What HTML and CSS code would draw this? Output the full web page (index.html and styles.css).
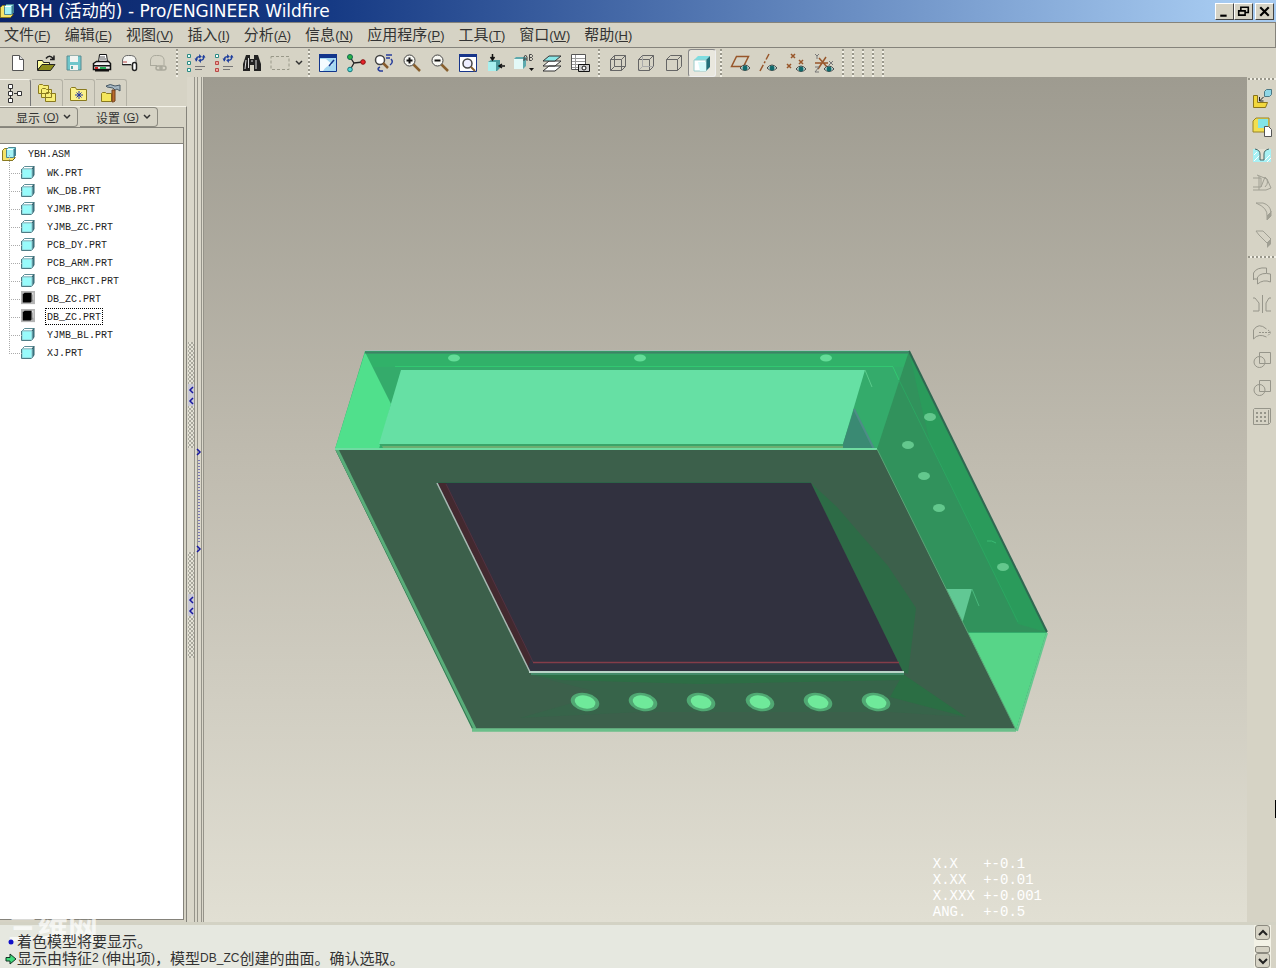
FILE: index.html
```html
<!DOCTYPE html>
<html lang="zh-CN">
<head>
<meta charset="utf-8">
<title>YBH (活动的) - Pro/ENGINEER Wildfire</title>
<link rel="stylesheet" href="styles.css">
</head>
<body>
<svg class="defs" aria-hidden="true">
  <symbol id="asm" viewBox="0 0 14 14"><path d="M.5 3.500l2-2h3v7h7v3l-2 2H.5z" fill="#f5e36a" stroke="#8a7a20"/><path d="M10.500 13.500l3-3" stroke="#6b5d18"/><path d="M4.500 2.500l2-2h7v8l-2 2H4.500z" fill="#a4f2f4" stroke="#4d8793"/><path d="M11.500 2.500l2-2v8l-2 2z" fill="#3c7f93"/><path d="M5 2.500h6" stroke="#fff"/></symbol>
  <symbol id="part" viewBox="0 0 14 14"><path d="M1 4l2.500-2.500h9.500L11 4z" fill="#fff" stroke="#5d8c96"/><path d="M11 4l2-2.500v8.500L11 13z" fill="#3e8693" stroke="#35606a"/><path d="M1 4H11v9H1z" fill="#98fbfb" stroke="#8fc4cb"/><path d="M.5 4v9.500h10" fill="none" stroke="#4f7c85"/></symbol>
  <symbol id="partsel" viewBox="0 0 16 16"><path d="M0 0h16v15H0z" fill="#b4b4b4"/><path d="M3 3l1-1h8v10l-1 1H2V3z" fill="#000"/><path d="M13.500 2v8" stroke="#fff"/><path d="M12.500 4v8" stroke="#555"/></symbol>
  <symbol id="new" viewBox="0 0 20 20"><path d="M4.500 2.500h7l4 4v11h-11z" fill="#fff" stroke="#555"/><path d="M11.500 2.500v4h4" fill="#ddd" stroke="#555"/></symbol>
  <symbol id="open" viewBox="0 0 20 20"><path d="M1.500 17V7.500h5l1 2h6V12H6z" fill="#ffffa0" stroke="#222"/><path d="M1.500 17.500L6 11.500h13l-4.500 6z" fill="#8c8c1c" stroke="#222"/><path d="M10 5.500c2-3 5-3 7 0M18 2.500v4h-4" fill="none" stroke="#222" stroke-width="1.500"/></symbol>
  <symbol id="save" viewBox="0 0 20 20"><path d="M3 3h14v14H3z" fill="#6fc6cb" stroke="#5b8c92"/><path d="M6 3h8v6H6zM6 12h8v5H6z" fill="#f1f4f1"/><path d="M7 13h2v3H7z" fill="#5aa"/></symbol>
  <symbol id="print" viewBox="0 0 20 20"><path d="M6.500 9l1-7.500h7L15.500 9z" fill="#fff" stroke="#111"/><path d="M8 4h5M8 6h6" stroke="#555"/><path d="M1.500 10.500l3-2h12l2 2v6h-17z" fill="#eee" stroke="#111" stroke-width="1.500"/><path d="M2 12h16v1.500H2zM3 17h14v1.500H3z" fill="#111"/><path d="M3 14h3v2H3z" fill="#c22"/><path d="M8 14h6v2H8z" fill="#2a5"/></symbol>
  <symbol id="mail" viewBox="0 0 20 20"><path d="M2.500 12V7q1-5 6-4.500 7-.5 7.500 4v5.500z" fill="#f5f5f2" stroke="#666"/><path d="M2 11.500h9" stroke="#222"/><path d="M3 9h4" stroke="#b44"/><rect x="12.500" y="9.500" width="4" height="8" rx="2" fill="#fff" stroke="#222" stroke-width="1.500"/></symbol>
  <symbol id="maillink" viewBox="0 0 20 20"><path d="M2.500 13V7q1-5 6-4.500 7-.5 7.500 4V12M2 12.500h7" fill="none" stroke="#aaa99c"/><rect x="8" y="13" width="6" height="4" rx="2" fill="none" stroke="#aaa99c" stroke-width="1.500"/><rect x="12" y="13" width="6" height="4" rx="2" fill="none" stroke="#aaa99c" stroke-width="1.500"/></symbol>
  <symbol id="arrows" viewBox="0 0 12 12"><path d="M2 9V7q0-3 4-3M10 3v2q0 3-4 3" fill="none" stroke="#1f3f9d" stroke-width="1.500"/><path d="M5 1l3 3-3 2zM7 6L4 8l3 3zM0 6h4L2 9zM8 5h4l-2-3z" fill="#1f3f9d"/></symbol>
  <symbol id="regen" viewBox="0 0 20 20"><path d="M1.500 1.500h3v3h-3zM1.500 8.500h3v3h-3zM1.500 15.500h3v3h-3z" fill="#e6fffa" stroke="#2b8b84"/><use href="#arrows" x="8" y="0" width="12" height="11"/><path d="M9 13.500h10M9 16.500h7" stroke="#777"/></symbol>
  <symbol id="regenred" viewBox="0 0 20 20"><path d="M1.500 1.500h3v3h-3z" fill="#fff" stroke="#2b8b84"/><path d="M1.500 8.500h3v3h-3zM1.500 15.500h3v3h-3z" fill="#f3a39c" stroke="#b84a47"/><use href="#arrows" x="8" y="0" width="12" height="11"/><path d="M9 13.500h10M9 16.500h7" stroke="#777"/></symbol>
  <symbol id="find" viewBox="0 0 20 20"><path d="M4 2h4v4h4V2h4l3 9v7h-7v-6H8v6H1v-7z" fill="#222"/><path d="M4 7l-1 9M6.500 5v10M14 7v9M9 8h2" fill="none" stroke="#ddd"/></symbol>
  <symbol id="box" viewBox="0 0 20 20"><path d="M1 3.500h18v13H1z" fill="none" stroke="#999889" stroke-dasharray="3 2"/></symbol>
  <symbol id="repaint" viewBox="0 0 20 20"><path d="M1.500 1.500h17v17h-17z" fill="#a5d8f2" stroke="#12358c"/><path d="M1 1h18v4H1z" fill="#12358c"/><path d="M2 18V6h6l7 6q-7 0-10 6z" fill="#f4fbff"/><path d="M16 7l-5 6" stroke="#12358c" stroke-width="1.500"/></symbol>
  <symbol id="spin" viewBox="0 0 20 20"><path d="M4 4l4 6 9-1M8 10l-4 7" fill="none" stroke="#222" stroke-width="1.300"/><circle cx="4" cy="4" r="2.500" fill="#29b343" stroke="#165"/><circle cx="17" cy="9" r="2.300" fill="#e8232a" stroke="#811"/><circle cx="4" cy="16.500" r="2.300" fill="#53d7d7" stroke="#177"/></symbol>
  <symbol id="orient" viewBox="0 0 20 20"><circle cx="6" cy="7" r="4.500" fill="#fff" stroke="#444" stroke-width="1.500"/><path d="M9 10l5 5" stroke="#875b2c" stroke-width="2.500"/><path d="M12 2h6M12 5h4M17 6q3 3-1 6M6 14q-4 2 0 4h3" fill="none" stroke="#263d9c" stroke-width="1.500"/></symbol>
  <symbol id="zoomin" viewBox="0 0 20 20"><path d="M11 11l7 7" stroke="#88602f" stroke-width="2.500"/><circle cx="7.500" cy="7.500" r="5.500" fill="#f7f7f2" stroke="#444"/><path d="M4.500 7.500h6M7.500 4.500v6" stroke="#111" stroke-width="2"/></symbol>
  <symbol id="zoomout" viewBox="0 0 20 20"><path d="M11 11l7 7" stroke="#88602f" stroke-width="2.500"/><circle cx="7.500" cy="7.500" r="5.500" fill="#f7f7f2" stroke="#444"/><path d="M4.500 7.500h6" stroke="#111" stroke-width="2"/></symbol>
  <symbol id="refit" viewBox="0 0 20 20"><path d="M1.500 1.500h17v17h-17z" fill="#fff" stroke="#17358a"/><path d="M1 1h18v3H1z" fill="#17358a"/><circle cx="9.500" cy="10.500" r="4.500" fill="#eef" stroke="#444" stroke-width="1.500"/><path d="M13 14l4 4" stroke="#88602f" stroke-width="2"/></symbol>
  <symbol id="center" viewBox="0 0 20 20"><path d="M2 9l3-2h9v8l-3 3H2z" fill="#4b9c9e"/><path d="M2 9h8v9H2z" fill="#a9f0ef"/><path d="M6.500 1v5M4.500 4l2 3 2-3M19 13h-5M16 11l-3 2 3 2" fill="none" stroke="#111" stroke-width="1.500"/></symbol>
  <symbol id="views" viewBox="0 0 20 20"><path d="M0 6l2-2h10v9l-3 3H0z" fill="#5da9ad"/><path d="M0 6h9v10H0z" fill="#e3f9f7"/><path d="M10 8V4l1.500-2L13 4v4M10 6h3M15.500 1.500v6h2l1-1V5.500l-1-1h-2 2l1-1V2.500l-1-1z" fill="none" stroke="#444"/><path d="M15 15h5l-2.500 3z" fill="#111"/></symbol>
  <symbol id="layers" viewBox="0 0 20 20"><path d="M1 18l6-5h12l-6 5zM1 13l6-5h12l-6 5z" fill="#fff" stroke="#333"/><path d="M1 8l6-5h12l-6 5z" fill="#8be6e6" stroke="#333"/></symbol>
  <symbol id="viewmgr" viewBox="0 0 20 20"><path d="M1.500 1.500h14v15h-14z" fill="#fff" stroke="#555"/><path d="M2 5.500h13M2 8.500h13M2 11.500h13M2 14.500h13M5.500 2v14" stroke="#999"/><path d="M8.500 11.500h11v7h-11z" fill="#ccc" stroke="#111"/><circle cx="14" cy="15" r="2" fill="#fff" stroke="#111"/></symbol>
  <symbol id="wire" viewBox="0 0 20 20"><path d="M2.500 6.500h11v11h-11zM6.500 2.500h11v11h-11zM2.500 6.500l4-4M13.500 6.500l4-4M13.500 17.500l4-4M2.500 17.500l4-4" fill="none" stroke="#666"/></symbol>
  <symbol id="hidden" viewBox="0 0 20 20"><path d="M2.500 6.500h11v11h-11zM2.500 6.500l4-4h11v11l-4 4M13.500 6.500l4-4" fill="none" stroke="#666"/><path d="M6.500 3v10.500h11M2.500 17.500l4-4" fill="none" stroke="#aaa"/></symbol>
  <symbol id="nohidden" viewBox="0 0 20 20"><path d="M2.500 6.500h11v11h-11zM2.500 6.500l4-4h11v11l-4 4M13.500 6.500l4-4" fill="none" stroke="#666"/></symbol>
  <symbol id="shade" viewBox="0 0 20 20"><path d="M2 7l4-4h12l-4 4z" fill="#7fdde0"/><path d="M14 7l4-4v11l-4 4z" fill="#24707a"/><path d="M2 7h12v11H2z" fill="#fff" stroke="#9cc"/><path d="M6 9h8v9H8z" fill="#d7fafa"/></symbol>
  <symbol id="eye" viewBox="0 0 10 8"><path d="M0 4q5-6 10 0-5 5-10 0z" fill="#cfe7e2" stroke="#444"/><circle cx="5" cy="4" r="2.500" fill="#11696b"/></symbol>
  <symbol id="dplane" viewBox="0 0 20 20"><path d="M1.500 13.500l5-10h12l-5 10z" fill="none" stroke="#98562a" stroke-width="1.500"/><use href="#eye" x="10" y="11" width="10" height="8"/></symbol>
  <symbol id="daxis" viewBox="0 0 20 20"><path d="M2 18L11 1" stroke="#98562a" stroke-width="1.500" stroke-dasharray="7 2 2 2"/><use href="#eye" x="9" y="11" width="10" height="8"/></symbol>
  <symbol id="dpoint" viewBox="0 0 20 20"><path d="M5 1l4 4M9 1L5 5M13 7l4 4M17 7l-4 4M1 11l4 4M5 11l-4 4" stroke="#98562a" stroke-width="1.500"/><use href="#eye" x="10" y="12" width="10" height="8"/></symbol>
  <symbol id="dcsys" viewBox="0 0 20 20"><path d="M1 10h13M4 16L12 4M5 5l8 9" stroke="#98562a" stroke-width="1.500"/><path d="M1 1l2 2 2-2M3 3v3M15 8l4 4M19 8l-4 4M1 14h4l-4 5h4" fill="none" stroke="#777"/><use href="#eye" x="10" y="12" width="10" height="8"/></symbol>
  <symbol id="tree" viewBox="0 0 20 20"><path d="M3.500 1.500h4v4h-4zM3.500 8.500h4v4h-4zM3.500 15.500h4v4h-4zM12.500 8.500h4v4h-4z" fill="#fff" stroke="#333"/><path d="M5.500 6v2M5.500 13v2M9 10.500h3" stroke="#333"/></symbol>
  <symbol id="folders" viewBox="0 0 20 20"><path d="M1.500 10.500V2.500l1-1h3l1 1h5v8zM4.500 14.500V6.500l1-1h3l1 1h5v8zM8.500 18.500V10.500l1-1h3l1 1h5v8z" fill="#f8ee78" stroke="#8a7a1e"/></symbol>
  <symbol id="favorite" viewBox="0 0 20 20"><path d="M1.500 17.500v-12l1-1h4l1 2h10v11z" fill="#fbf18a" stroke="#8a7a1e"/><path d="M10 8v8M6 12h8M7.500 9.500l5 5M12.500 9.500l-5 5" stroke="#2334a4"/></symbol>
  <symbol id="tools" viewBox="0 0 20 20"><path d="M.5 18.500v-8l1-1h3l1 1h5v8z" fill="#f5e65c" stroke="#8a7a1e"/><path d="M5 3q4-3 9 0l5-1v6l-3-2-2 1-2-2-6-1z" fill="#a4b6c2" stroke="#495a66"/><path d="M11 7h3v11q-1 1-3 1z" fill="#bb6b2d" stroke="#71411c"/></symbol>
  <symbol id="assemble" viewBox="0 0 20 20"><path d="M1.500 6.500h4v7h10l-2 5h-12z" fill="#f2d73c" stroke="#8a741b"/><path d="M12.500 2.500l2-2h5v5l-2 2h-5z" fill="#8ed6e6" stroke="#4c7884"/><path d="M11.500 8l-4 4M7.500 8v4h4" fill="none" stroke="#222"/></symbol>
  <symbol id="create" viewBox="0 0 20 20"><path d="M1 4l3-3h13v12l-2 2H1z" fill="#f2df50" stroke="#988426"/><path d="M6 2h10v7l-2 2H6z" fill="#82e5e6"/><path d="M12.500 9.500h4l3 3v7h-7z" fill="#fff" stroke="#555"/></symbol>
  <symbol id="hole" viewBox="0 0 20 20"><path d="M1 4h18v13H1z" fill="#a8f1f4"/><path d="M2 16l6-6M13 15l5-5M2 10l3-3M15 17l4-4" stroke="#fff"/><path d="M3 4q5 1 5 5v6h4V9q0-4 5-5" fill="#e2dfd2" stroke="#466"/></symbol>
  <symbol id="shell" viewBox="0 0 20 20"><path d="M1 5h8v9H1M5 2l10 4 4 9-5 2H1M9 14l4-10M13 4q5 5 0 10M7 17V3" fill="none" stroke="#a09f93"/></symbol>
  <symbol id="round" viewBox="0 0 20 20"><path d="M4 2h7q7 2 8 9l-4 4q1-8-11-13zM15 15v4l4-4v-5" fill="none" stroke="#a09f93"/><path d="M15 15l4-4v4l-4 4z" fill="#a09f93"/></symbol>
  <symbol id="chamfer" viewBox="0 0 20 20"><path d="M4 2h7l8 8-4 4L7 6z" fill="none" stroke="#a09f93"/><path d="M15 14l4-4v5l-4 4z" fill="#a09f93"/></symbol>
  <symbol id="merge" viewBox="0 0 20 20"><path d="M1.500 14V7q3-6 13-5v5M5.500 18v-7q4-5 13-3v8q-7-3-13 2zM2 13h3" fill="none" stroke="#96958a"/></symbol>
  <symbol id="mirror" viewBox="0 0 20 20"><path d="M10.500 1v18M1 4h2l4 5v8H1M19 4h-2l-3 5v8h5" fill="none" stroke="#96958a"/></symbol>
  <symbol id="extend" viewBox="0 0 20 20"><path d="M1.500 17V8q5-8 13-1M1.500 17q5-6 13-2" fill="none" stroke="#96958a"/><path d="M7 10.500h12M16 8l3 2.500-3 3" fill="none" stroke="#96958a" stroke-dasharray="2 1"/></symbol>
  <symbol id="bool" viewBox="0 0 20 20"><path d="M7.500 2.500h11v11h-11z" fill="none" stroke="#96958a"/><circle cx="7.500" cy="12" r="5.500" fill="none" stroke="#96958a"/></symbol>
  <symbol id="pattern" viewBox="0 0 20 20"><path d="M1.500 3.500l1-1h16v14l-2 2h-15zM16.500 18V4" fill="none" stroke="#96958a"/><path d="M4 7h11M4 11h11M4 15h11" stroke="#96958a" stroke-width="2" stroke-dasharray="2 2"/></symbol>
</svg>

<header class="titlebar">
  <svg class="appicon" viewBox="0 0 14 14"><use href="#asm"/></svg>
  <h1>YBH (活动的) - Pro/ENGINEER Wildfire</h1>
  <div class="winbtns">
    <button aria-label="最小化"><svg viewBox="0 0 16 14"><path d="M4 11h6" stroke="#000" stroke-width="2"/></svg></button>
    <button aria-label="还原"><svg viewBox="0 0 16 14"><path d="M5.500 6V3h7v5H10M3.500 6.500h6v4h-6zM5 3h8M3 6.500h7" fill="none" stroke="#000" stroke-width="1.500"/></svg></button>
    <button class="close" aria-label="关闭"><svg viewBox="0 0 16 14"><path d="M4 3l8 8M12 3l-8 8" stroke="#000" stroke-width="2"/></svg></button>
  </div>
</header>

<nav class="menubar">
  <button>文件<span>(<u>F</u>)</span></button>
  <button>编辑<span>(<u>E</u>)</span></button>
  <button>视图<span>(<u>V</u>)</span></button>
  <button>插入<span>(<u>I</u>)</span></button>
  <button>分析<span>(<u>A</u>)</span></button>
  <button>信息<span>(<u>N</u>)</span></button>
  <button>应用程序<span>(<u>P</u>)</span></button>
  <button>工具<span>(<u>T</u>)</span></button>
  <button>窗口<span>(<u>W</u>)</span></button>
  <button>帮助<span>(<u>H</u>)</span></button>
</nav>

<div class="toolbar">
  <button aria-label="新建"><svg><use href="#new"/></svg></button>
  <button aria-label="打开"><svg><use href="#open"/></svg></button>
  <button aria-label="保存"><svg><use href="#save"/></svg></button>
  <button aria-label="打印"><svg><use href="#print"/></svg></button>
  <button aria-label="发送邮件"><svg><use href="#mail"/></svg></button>
  <button aria-label="发送链接" disabled><svg><use href="#maillink"/></svg></button>
  <i class="grip"></i>
  <button aria-label="再生"><svg><use href="#regen"/></svg></button>
  <button aria-label="自定义再生"><svg><use href="#regenred"/></svg></button>
  <button aria-label="查找"><svg><use href="#find"/></svg></button>
  <button aria-label="框选"><svg><use href="#box"/></svg></button>
  <button class="drop" aria-label="选取选项"><svg viewBox="0 0 8 6"><path d="M1 1l3 3 3-3" fill="none" stroke="#333" stroke-width="1.500"/></svg></button>
  <i class="grip"></i>
  <button aria-label="重画"><svg><use href="#repaint"/></svg></button>
  <button aria-label="旋转中心"><svg><use href="#spin"/></svg></button>
  <button aria-label="定向模式"><svg><use href="#orient"/></svg></button>
  <button aria-label="放大"><svg><use href="#zoomin"/></svg></button>
  <button aria-label="缩小"><svg><use href="#zoomout"/></svg></button>
  <button aria-label="重新调整"><svg><use href="#refit"/></svg></button>
  <button aria-label="重定向"><svg><use href="#center"/></svg></button>
  <button aria-label="已保存视图"><svg><use href="#views"/></svg></button>
  <button aria-label="层"><svg><use href="#layers"/></svg></button>
  <button aria-label="视图管理器"><svg><use href="#viewmgr"/></svg></button>
  <i class="grip"></i>
  <button aria-label="线框"><svg><use href="#wire"/></svg></button>
  <button aria-label="隐藏线"><svg><use href="#hidden"/></svg></button>
  <button aria-label="无隐藏线"><svg><use href="#nohidden"/></svg></button>
  <button class="pressed" aria-label="着色" aria-pressed="true"><svg><use href="#shade"/></svg></button>
  <i class="grip"></i>
  <button aria-label="基准平面"><svg><use href="#dplane"/></svg></button>
  <button aria-label="基准轴"><svg><use href="#daxis"/></svg></button>
  <button aria-label="基准点"><svg><use href="#dpoint"/></svg></button>
  <button aria-label="坐标系"><svg><use href="#dcsys"/></svg></button>
  <i class="grip"></i><i class="grip"></i><i class="grip"></i><i class="grip"></i><i class="grip"></i>
</div>

<main class="work">
  <aside class="side">
    <div class="tabs">
      <button class="on" aria-label="模型树"><svg><use href="#tree"/></svg></button>
      <button aria-label="文件夹"><svg><use href="#folders"/></svg></button>
      <button aria-label="收藏夹"><svg><use href="#favorite"/></svg></button>
      <button aria-label="连接"><svg><use href="#tools"/></svg></button>
    </div>
    <div class="panel">
      <div class="options">
        <button>显示<span>(<u>O</u>)</span><svg viewBox="0 0 8 6"><path d="M1 1l3 3 3-3" fill="none" stroke="#333" stroke-width="1.500"/></svg></button>
        <button>设置<span>(<u>G</u>)</span><svg viewBox="0 0 8 6"><path d="M1 1l3 3 3-3" fill="none" stroke="#333" stroke-width="1.500"/></svg></button>
      </div>
      <div class="colhead"></div>
      <div class="tree">
        <div class="root"><svg><use href="#asm"/></svg><span>YBH.ASM</span></div>
        <ul>
          <li><svg><use href="#part"/></svg><span>WK.PRT</span></li>
          <li><svg><use href="#part"/></svg><span>WK_DB.PRT</span></li>
          <li><svg><use href="#part"/></svg><span>YJMB.PRT</span></li>
          <li><svg><use href="#part"/></svg><span>YJMB_ZC.PRT</span></li>
          <li><svg><use href="#part"/></svg><span>PCB_DY.PRT</span></li>
          <li><svg><use href="#part"/></svg><span>PCB_ARM.PRT</span></li>
          <li><svg><use href="#part"/></svg><span>PCB_HKCT.PRT</span></li>
          <li><svg><use href="#partsel"/></svg><span>DB_ZC.PRT</span></li>
          <li><svg><use href="#partsel"/></svg><span class="focus">DB_ZC.PRT</span></li>
          <li><svg><use href="#part"/></svg><span>YJMB_BL.PRT</span></li>
          <li><svg><use href="#part"/></svg><span>XJ.PRT</span></li>
        </ul>
      </div>
    </div>
  </aside>

  <div class="splitter">
    <svg viewBox="0 0 17 316">
      <defs><pattern id="dots" width="4" height="4" patternUnits="userSpaceOnUse"><path d="M0 0h2v2H0zM2 2h2v2H2z" fill="#aaa99e"/></pattern></defs>
      <path d="M1 0h6v106H1zM1 210h6v106H1z" fill="#e4e2d6"/>
      <path d="M1 0h6v106H1zM1 210h6v106H1z" fill="url(#dots)"/>
      <path d="M1 42h6v22H1zM1 252h6v22H1z" fill="#c9c9d6"/>
      <path d="M6 45L3 48l3 3M6 56l-3 3 3 3M6 255l-3 3 3 3M6 266l-3 3 3 3M10 107l3 3-3 3M10 204l3 3-3 3" fill="none" stroke="#1818a0" stroke-width="1.500"/>
      <path d="M12 118v84" stroke="#1818a0" stroke-dasharray="1 2"/>
    </svg>
  </div>

  <section class="view">
    <svg class="model" viewBox="204 77 1043 845" role="img" aria-label="YBH 着色模型">
      <path d="M365 351H909L1047 632 1016 731H473L335 449z" fill="#34ab6b"/>
      <path d="M365 354H909L904 367H371z" fill="#31b169"/>
      <path d="M365 352L391 404 379 449H335z" fill="#50e08c"/>
      <path d="M395 366.500H893" stroke="#32c871"/>
      <path d="M401 370H865L843 444H379z" fill="#66e0a4"/>
      <path d="M379 444H843V446H382z" fill="#3aa569"/>
      <path d="M382 446H843V448H383z" fill="#6cae70"/>
      <path d="M854 409L874 449H843V444z" fill="#3a8a73"/>
      <path d="M854 409L874 449" stroke="#4e8d87" stroke-width="2"/>
      <path d="M865 370L872 387" stroke="#5acb8b"/>
      <path d="M893 367L899 380" stroke="#32c871"/>
      <path d="M909 351L1047 632H967L877 449z" fill="#31925c"/>
      <path d="M909 352L1046 632 1018 624 930 443 920 400z" fill="#2a9b5b"/>
      <path d="M899 380L1018 622" stroke="#2da562"/>
      <path d="M987 541q5-1 9 2" stroke="#3ab973" fill="none"/>
      <path d="M909 351L1047 632" stroke="#2f6851" stroke-width="2"/>
      <path d="M365 350.500H909" stroke="#a8bdb6"/>
      <path d="M365 352.500H909" stroke="#3c8365" stroke-width="2"/>
      <path d="M945 589H972L962 624z" fill="#61c894"/>
      <path d="M972 589L979 606" stroke="#49b87c"/>
      <path d="M967 633H1046L1016 730z" fill="#57d588"/>
      <path d="M1047 633L1017 731" stroke="#66c98f" stroke-width="2"/>
      <g fill="#63dd98"><ellipse cx="454" cy="358" rx="6" ry="3.500"/><ellipse cx="640" cy="358" rx="6" ry="3.500"/><ellipse cx="826" cy="358" rx="6" ry="3.500"/></g>
      <g fill="#63c88d"><ellipse cx="930" cy="417" rx="6" ry="4"/><ellipse cx="908" cy="445" rx="6" ry="4"/><ellipse cx="924" cy="476" rx="6" ry="4"/><ellipse cx="939" cy="508" rx="6" ry="4"/><ellipse cx="1003" cy="567" rx="6" ry="4"/></g>
      <path d="M335 449H877L1016 730H473z" fill="#3c604b"/>
      <path d="M520 718L572 703 590 690 530 675H903L966 717 890 712H640z" fill="#37644a"/>
      <path d="M530 674H903V680L700 684 560 680z" fill="#2d6d45"/>
      <path d="M903 674L966 717 890 697z" fill="#2b6e44"/>
      <path d="M811 483L837 507 888 566 916 608 908 674 903 672z" fill="#2d6b46"/>
      <path d="M337 449.500L475 729" stroke="#58ad79" stroke-width="3"/>
      <path d="M472 730H1016" stroke="#6bbf8a" stroke-width="3.500"/>
      <path d="M335 449H877" stroke="#70dba2" stroke-width="2"/>
      <path d="M877 449L1016 730" stroke="#5ba477"/>
      <path d="M437 483H811L903 672H530z" fill="#31313f"/>
      <path d="M438 483H446L531 657 528 668z" fill="#43292f"/>
      <path d="M446 484L533 662" stroke="#513343"/>
      <path d="M533 662.500H899" stroke="#853d49" stroke-width="1.500"/>
      <path d="M437 482.500H811" stroke="#2d6247"/>
      <path d="M437 483L530 672" stroke="#a9b9b3" stroke-width="1.500"/>
      <path d="M529 672H904" stroke="#bad5c8" stroke-width="2"/>
      <path d="M531 674H904" stroke="#438a69" stroke-width="2"/>
      <g fill="#50a873"><ellipse cx="585" cy="702" rx="14.500" ry="9" transform="rotate(12 585 702)"/><ellipse cx="643" cy="702" rx="14.500" ry="9" transform="rotate(12 643 702)"/><ellipse cx="701" cy="702" rx="14.500" ry="9" transform="rotate(12 701 702)"/><ellipse cx="760" cy="702" rx="14.500" ry="9" transform="rotate(12 760 702)"/><ellipse cx="818" cy="702" rx="14.500" ry="9" transform="rotate(12 818 702)"/><ellipse cx="876" cy="702" rx="14.500" ry="9" transform="rotate(12 876 702)"/></g>
      <g fill="#6fe99a"><ellipse cx="585" cy="702" rx="10.500" ry="6.500" transform="rotate(12 585 702)"/><ellipse cx="643" cy="702" rx="10.500" ry="6.500" transform="rotate(12 643 702)"/><ellipse cx="701" cy="702" rx="10.500" ry="6.500" transform="rotate(12 701 702)"/><ellipse cx="760" cy="702" rx="10.500" ry="6.500" transform="rotate(12 760 702)"/><ellipse cx="818" cy="702" rx="10.500" ry="6.500" transform="rotate(12 818 702)"/><ellipse cx="876" cy="702" rx="10.500" ry="6.500" transform="rotate(12 876 702)"/></g>
    </svg>
    <pre class="tolerance">X.X   +-0.1
X.XX  +-0.01
X.XXX +-0.001
ANG.  +-0.5</pre>
  </section>

  <div class="features">
    <i class="hgrip"></i>
    <button aria-label="装配"><svg><use href="#assemble"/></svg></button>
    <button aria-label="创建"><svg><use href="#create"/></svg></button>
    <button aria-label="孔"><svg><use href="#hole"/></svg></button>
    <button aria-label="壳" disabled><svg><use href="#shell"/></svg></button>
    <button aria-label="倒圆角" disabled><svg><use href="#round"/></svg></button>
    <button aria-label="倒角" disabled><svg><use href="#chamfer"/></svg></button>
    <i class="hgrip"></i>
    <button aria-label="合并" disabled><svg><use href="#merge"/></svg></button>
    <button aria-label="镜像" disabled><svg><use href="#mirror"/></svg></button>
    <button aria-label="延伸" disabled><svg><use href="#extend"/></svg></button>
    <button aria-label="相交" disabled><svg><use href="#bool"/></svg></button>
    <button aria-label="修剪" disabled><svg><use href="#bool"/></svg></button>
    <button aria-label="阵列" disabled><svg><use href="#pattern"/></svg></button>
    <i class="caret"></i>
  </div>
</main>

<footer class="messages">
  <div class="log">
    <span class="mark">三维网</span>
    <p><svg viewBox="0 0 12 12"><circle cx="6" cy="6" r="2.500" fill="#1010c8"/></svg>着色模型将要显示。</p>
    <p><svg viewBox="0 0 12 12"><path d="M1 4.500h4V1l6 5-6 5V8H1z" fill="#3fdc7c" stroke="#132"/></svg>显示由特征<span>2 (</span>伸出项<span>)</span>，模型<span>DB_ZC</span>创建的曲面。确认选取。</p>
  </div>
  <div class="scroll">
    <button aria-label="向上"><svg viewBox="0 0 10 8"><path d="M1 6l4-4 4 4" fill="none" stroke="#222" stroke-width="2"/></svg></button>
    <i class="thumb"></i>
    <button aria-label="向下"><svg viewBox="0 0 10 8"><path d="M1 2l4 4 4-4" fill="none" stroke="#222" stroke-width="2"/></svg></button>
  </div>
</footer>
</body>
</html>
```
FILE: styles.css
```css
* { box-sizing: border-box; }

body {
  margin: 0;
  height: 100vh;
  display: flex;
  flex-direction: column;
  overflow: hidden;
  background: #d6d3c5;
  color: #333;
  font-family: "Liberation Sans", "Noto Sans CJK SC", sans-serif;
}

button {
  margin: 0;
  padding: 0;
  border: 0;
  background: none;
  color: inherit;
  font: inherit;
}

svg { display: block; }
.defs { position: absolute; width: 0; height: 0; }

.titlebar {
  flex: none;
  display: flex;
  align-items: center;
  height: 22px;
  padding-right: 2px;
  background: linear-gradient(90deg, #0a246a, #163a84 26%, #a6caf0 96%);
}
.appicon { width: 14px; height: 14px; margin-right: 4px; }
.titlebar h1 {
  flex: 1;
  margin: 0;
  color: #fff;
  font: 17px/20px "DejaVu Sans", "Noto Sans CJK SC", sans-serif;
  white-space: nowrap;
}
.winbtns { display: flex; }
.winbtns button {
  width: 19px;
  height: 17px;
  border: 1px solid;
  border-color: #fff #444 #444 #fff;
  background: #d6d3c5;
}
.winbtns .close { margin-left: 2px; }

.menubar {
  flex: none;
  display: flex;
  gap: 14px;
  height: 26px;
  padding: 0 4px;
  border: 1px solid #85837b;
  border-width: 1px 1px 1px 0;
  font-size: 15px;
  line-height: 22px;
}
.menubar span { font-size: 13px; }

.toolbar {
  flex: none;
  display: flex;
  align-items: center;
  height: 29px;
  padding-left: 4px;
}
.toolbar button, .features button {
  flex: none;
  display: grid;
  place-items: center;
  width: 28px;
  height: 28px;
}
.toolbar svg, .features svg, .tabs svg { width: 20px; height: 20px; }
.toolbar .drop { width: 10px; }
.toolbar .drop svg { width: 8px; height: 6px; }
.toolbar .pressed {
  border: 1px solid;
  border-color: #888 #eee #eee #888;
  border-radius: 3px;
  background: #e9e7de;
}
.grip {
  flex: none;
  width: 2px;
  height: 28px;
  margin: 0 4px;
  background: repeating-linear-gradient(#99978b 0 2px, #f2f0e6 2px 4px);
}

.work { flex: 1; display: flex; min-height: 0; }

.side {
  flex: none;
  display: flex;
  flex-direction: column;
  width: 187px;
}
.tabs { display: flex; gap: 1px; padding-top: 2px; }
.tabs button {
  display: grid;
  place-items: center;
  width: 31px;
  height: 27px;
  border: 1px solid #b4b2a6;
  border-width: 1px 1px 0 0;
  border-radius: 0 3px 0 0;
}
.tabs .on { border-color: #f5f3ea #777 #777 #777; }
.panel {
  flex: 1;
  display: flex;
  flex-direction: column;
  padding-right: 2px;
  border-top: 1px solid #f4f2e8;
  border-right: 1px solid #85837b;
}
.options { display: flex; gap: 2px; }
.options button {
  display: flex;
  align-items: center;
  justify-content: flex-end;
  width: 78px;
  height: 20px;
  padding-right: 6px;
  border: 1px solid #8c8a80;
  border-left: 0;
  border-radius: 0 4px 4px 0;
  font-size: 12px;
}
.options span { margin-left: 3px; font-size: 11px; }
.options svg { width: 8px; height: 6px; margin-left: 4px; }
.colhead {
  height: 17px;
  border: 1px solid #85837b;
  border-left: 0;
}
.tree {
  flex: 1;
  margin-bottom: 2px;
  padding: 1px 2px;
  border-right: 1px solid #85837b;
  border-bottom: 1px solid #85837b;
  background: #fff;
  font: 10px/18px "Liberation Mono", monospace;
  color: #222;
}
.root, .tree li { display: flex; align-items: center; height: 18px; }
.root svg { width: 14px; height: 14px; margin-right: 12px; }
.tree ul { margin: 0; padding: 0 0 0 7px; list-style: none; }
.tree li { position: relative; padding-left: 12px; }
.tree li::before {
  content: "";
  position: absolute;
  left: 0;
  top: -8px;
  width: 12px;
  height: 18px;
  border-left: 1px dotted #aaa;
  border-bottom: 1px dotted #aaa;
}
.tree li svg { width: 14px; height: 14px; margin-right: 11px; }
.tree li span { padding: 2px 1px 0; line-height: 13px; }
.root span { padding-top: 2px; }
.tree .focus { outline: 1px dotted #000; }

.splitter {
  flex: none;
  display: flex;
  align-items: center;
  width: 17px;
  background: linear-gradient(90deg, #dad7ca 7px, #96948a 7px 8px, #dad7ca 8px 10px, #96948a 10px 11px, #dad7ca 11px 14px, #96948a 14px 15px, #dad7ca 15px 16px, #96948a 16px);
}
.splitter svg { width: 17px; height: 316px; }

.view {
  flex: 1;
  min-width: 0;
  position: relative;
  background: linear-gradient(#9e9b90, #bfbbaf 45%, #e1dfd3);
}
.model { width: 100%; height: 100%; }
.tolerance {
  position: absolute;
  right: 205px;
  bottom: 2px;
  margin: 0;
  color: #fff;
  font: 14px/16px "Liberation Mono", monospace;
}

.features {
  flex: none;
  position: relative;
  display: flex;
  flex-direction: column;
  align-items: center;
  width: 29px;
}
.hgrip {
  width: 28px;
  height: 2px;
  margin: 3px 0 4px;
  background: repeating-linear-gradient(90deg, #99978b 0 2px, #f2f0e6 2px 4px);
}
.hgrip:first-child { margin: 1px 0 5px; }
.caret {
  position: absolute;
  right: 0;
  bottom: 104px;
  width: 1px;
  height: 18px;
  background: #000;
}

.messages {
  flex: none;
  display: flex;
  height: 46px;
  padding-right: 5px;
  border-top: 3px solid #d3d2c4;
}
.log {
  flex: 1;
  position: relative;
  padding: 8px 0 0 5px;
  background: #e6e8e0;
  font-size: 15px;
}
.log p {
  position: relative;
  display: flex;
  align-items: center;
  margin: 0;
  line-height: 17px;
  white-space: pre;
}
.log p svg { width: 12px; height: 12px; }
.log p span { font-size: 12px; }
.mark {
  position: absolute;
  left: 8px;
  top: -12px;
  color: #fff;
  font-size: 30px;
  font-weight: bold;
  line-height: 32px;
  opacity: .7;
}
.scroll {
  display: flex;
  flex-direction: column;
  width: 17px;
  padding: 0 1px;
  background: #f3f2e6;
}
.scroll button {
  display: grid;
  place-items: center;
  height: 15px;
  border: 1px solid #8c8a80;
  border-radius: 3px;
  background: #d6d3c5;
}
.scroll button svg { width: 10px; height: 8px; }
.thumb {
  height: 7px;
  margin-top: auto;
  border: 1px solid #8c8a80;
  border-radius: 2px;
  background: #d6d3c5;
}
```
